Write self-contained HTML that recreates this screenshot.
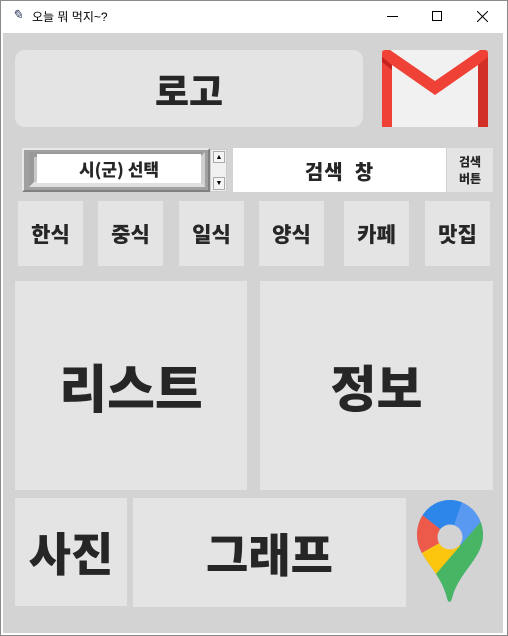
<!DOCTYPE html><html><head><meta charset="utf-8"><style>
*{margin:0;padding:0;box-sizing:border-box}
body{width:508px;height:636px;background:#fff;position:relative;overflow:hidden;font-family:"Liberation Sans","Noto Sans CJK KR",sans-serif;}
.win{position:absolute;left:0;top:0;width:508px;height:636px;border:1px solid #8a8a8a}
.title{position:absolute;left:1px;top:1px;width:506px;height:31px;background:#fff;font-size:12px;color:#000}
.content{position:absolute;left:3px;top:33px;width:500px;height:600px;background:#d3d3d3}
.b{position:absolute;background:#e4e4e4;display:flex;align-items:center;justify-content:center;font-weight:900;color:#262626;font-family:"Noto Sans CJK KR",sans-serif}
</style></head><body>
<div class="win"></div>
<div class="title">
<span style="position:absolute;left:11px;top:6px;font-size:13px;font-style:italic;color:#235">✎</span>
<span style="position:absolute;left:31px;top:7px;font-family:'Liberation Sans','Noto Sans CJK KR',sans-serif">오늘 뭐 먹지~?</span>
<div style="position:absolute;left:386px;top:15px;width:11px;height:1px;background:#000"></div>
<div style="position:absolute;left:431px;top:10px;width:10px;height:10px;border:1px solid #000"></div>
<svg style="position:absolute;left:476px;top:10px" width="11" height="11"><path d="M0 0L11 11M11 0L0 11" stroke="#000" stroke-width="1"/></svg>
</div>
<div class="content"></div>
<div class="b" style="left:15px;top:50px;width:348px;height:77px;border-radius:10px;font-size:37px">로고</div>
<svg style="position:absolute;left:382px;top:50px" width="106" height="77" viewBox="0 0 106 77">
<rect x="0" y="0" width="106" height="77" rx="3" fill="#f1f1f1"/>
<path d="M0 3Q0 0 3 0H8L53 31L98 0H103Q106 0 106 3V77H96V15L53 45L10 15V77H0Z" fill="#ef4136"/>
<path d="M96 15L106 7V77H96Z" fill="#d22f27"/>
<path d="M0 7L10 15V20L0 12Z" fill="#c5221f"/>
</svg>
<div style="position:absolute;left:22px;top:148px;width:188px;height:44px;background:#a0a0a0;border:2px solid;border-color:#e8e8e8 #808080 #808080 #e8e8e8"></div>
<div style="position:absolute;left:29px;top:152px;width:176px;height:35px;border:5px solid;border-color:#9a9a9a #d0d0d0 #e0e0e0 #9a9a9a;background:#c8c8c8"></div>
<div class="b" style="left:37px;top:154px;width:164px;height:29px;background:#fff;font-size:17px">시(군) 선택</div>
<div style="position:absolute;left:210px;top:149px;width:17px;height:43px;background:#f0f0f0;border:1px solid #ccc"></div>
<div style="position:absolute;left:213px;top:151px;width:12px;height:12px;background:#f4f4f4;border:1px solid #aaa;font-size:7px;text-align:center;line-height:11px">▲</div>
<div style="position:absolute;left:213px;top:177px;width:12px;height:13px;background:#f4f4f4;border:1px solid #aaa;font-size:7px;text-align:center;line-height:12px">▼</div>
<div class="b" style="left:233px;top:148px;width:213px;height:44px;background:#fff;font-size:20px;letter-spacing:1px">검색&nbsp;&nbsp;창</div>
<div class="b" style="left:447px;top:148px;width:46px;height:44px;font-size:12px;line-height:17px;text-align:center">검색<br>버튼</div>
<div class="b" style="left:18px;top:201px;width:65px;height:65px;font-size:21px">한식</div>
<div class="b" style="left:98px;top:201px;width:65px;height:65px;font-size:21px">중식</div>
<div class="b" style="left:179px;top:201px;width:65px;height:65px;font-size:21px">일식</div>
<div class="b" style="left:259px;top:201px;width:65px;height:65px;font-size:21px">양식</div>
<div class="b" style="left:344px;top:201px;width:65px;height:65px;font-size:21px">카페</div>
<div class="b" style="left:425px;top:201px;width:65px;height:65px;font-size:21px">맛집</div>
<div class="b" style="left:15px;top:281px;width:232px;height:209px;font-size:52px">리스트</div>
<div class="b" style="left:260px;top:281px;width:233px;height:209px;font-size:50px">정보</div>
<div class="b" style="left:15px;top:498px;width:112px;height:108px;font-size:46px">사진</div>
<div class="b" style="left:133px;top:498px;width:273px;height:109px;font-size:46px">그래프</div>
<svg style="position:absolute;left:416px;top:500px" width="70" height="103" viewBox="0 0 70 103">
<defs><clipPath id="c"><path d="M34 0C16 0 1 15 1 35C1 46 6 54 13 64C22 76 28 86 31 98C32 103 35 103 36 98C39 86 46 76 55 64C62 54 67 46 67 35C67 15 52 0 34 0Z"/></clipPath></defs>
<g clip-path="url(#c)">
<rect width="70" height="103" fill="#5a99f2"/>
<path d="M-10 2L34 37L50 -10H-10Z" fill="#2d86e9"/>
<path d="M-10 2L34 37L-10 62Z" fill="#ee5a4a"/>
<path d="M-10 62L34 37L50 50L-10 120Z" fill="#fcc60e"/>
<path d="M-10 109L80 4V110Z" fill="#48b564"/>
</g>
<circle cx="34" cy="37" r="12.5" fill="#d3d3d3"/>
</svg>
</body></html>
